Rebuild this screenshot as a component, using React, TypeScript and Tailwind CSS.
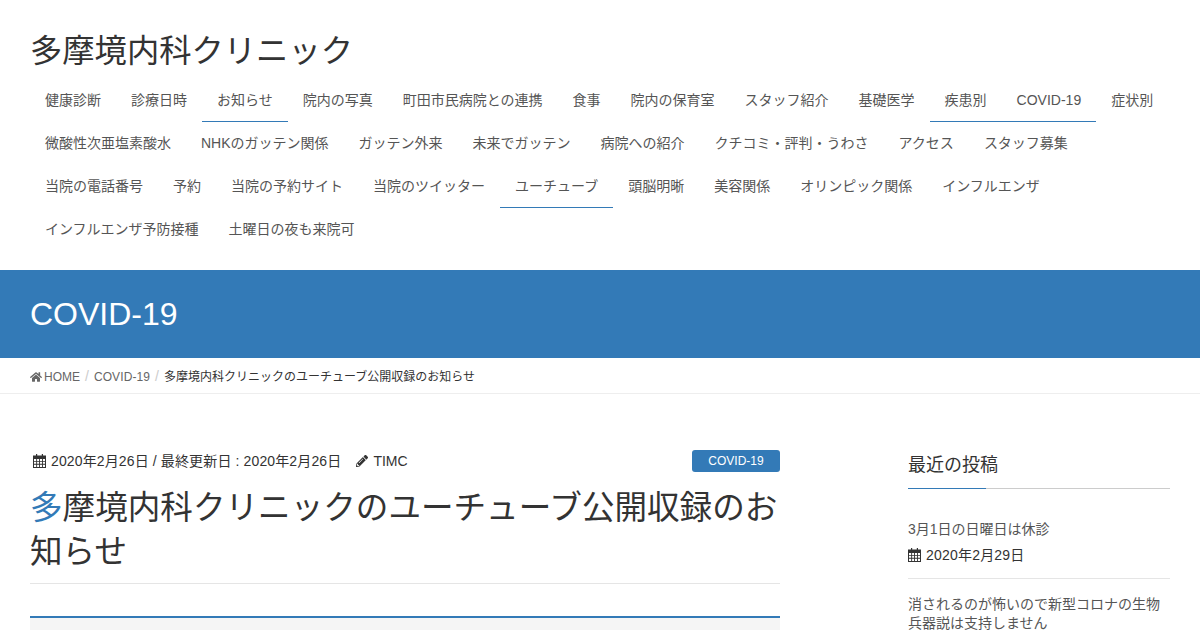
import { FaHome, FaPencilAlt } from "react-icons/fa";

const navRows = [
  [
    { label: "健康診断" },
    { label: "診療日時" },
    { label: "お知らせ", active: true },
    { label: "院内の写真" },
    { label: "町田市民病院との連携" },
    { label: "食事" },
    { label: "院内の保育室" },
    { label: "スタッフ紹介" },
    { label: "基礎医学" },
    { label: "疾患別", active: true },
    { label: "COVID-19", active: true },
    { label: "症状別" },
  ],
  [
    { label: "微酸性次亜塩素酸水" },
    { label: "NHKのガッテン関係" },
    { label: "ガッテン外来" },
    { label: "未来でガッテン" },
    { label: "病院への紹介" },
    { label: "クチコミ・評判・うわさ" },
    { label: "アクセス" },
    { label: "スタッフ募集" },
  ],
  [
    { label: "当院の電話番号" },
    { label: "予約" },
    { label: "当院の予約サイト" },
    { label: "当院のツイッター" },
    { label: "ユーチューブ", active: true },
    { label: "頭脳明晰" },
    { label: "美容関係" },
    { label: "オリンピック関係" },
    { label: "インフルエンザ" },
  ],
  [{ label: "インフルエンザ予防接種" }, { label: "土曜日の夜も来院可" }],
];

function CalendarIcon({ className }: { className?: string }) {
  return (
    <svg viewBox="0 0 13 14" className={className} fill="currentColor">
      <path
        fillRule="evenodd"
        d="M3 0h1.2v1.5h4.6V0H10v1.5h3V14H0V1.5h3V0ZM1 5v2h2.2V5H1Zm3.1 0v2h2v-2h-2Zm2.9 0v2h2V5H7Zm2.9 0v2H12V5H9.9ZM1 7.8v2h2.2v-2H1Zm3.1 0v2h2v-2h-2Zm2.9 0v2h2V7.800H7Zm2.9 0v2H12v-2H9.9ZM1 10.700v2.300h2.200v-2.300H1Zm3.100 0v2.300h2v-2.300h-2Zm2.900 0v2.300h2v-2.300H7Zm2.900 0v2.300H12v-2.300H9.900Z"
      />
    </svg>
  );
}

function App() {
  return (
    <div className="w-[1200px] h-[630px] overflow-hidden bg-white text-[#333] font-['Liberation_Sans','Noto_Sans_CJK_JP',sans-serif]">
      <header className="h-[270px] px-[30px]">
        <div className="pt-[28px] h-[79px] text-[32.3px] leading-[46px] whitespace-nowrap">多摩境内科クリニック</div>
        <nav className="flex flex-col">
          {navRows.map((row, i) => (
            <div key={i} className="flex h-[43px]">
              {row.map((item) => (
                <div
                  key={item.label}
                  className={`px-[15px] pt-[11px] text-sm leading-5 text-[#555] whitespace-nowrap border-b ${
                    item.active ? "border-b-[#337ab7]" : "border-b-transparent"
                  }`}
                >
                  {item.label}
                </div>
              ))}
            </div>
          ))}
        </nav>
      </header>

      <div className="h-[88px] bg-[#337ab7] px-[30px] flex items-center">
        <h1 className="text-[32px] leading-none text-white">COVID-19</h1>
      </div>

      <div className="h-[36px] border-b border-[#eee] px-[30px] flex items-center text-xs text-[#666] pt-[3px]">
        <FaHome className="w-[12px] h-[12px] mr-[2px]" />
        <span>HOME</span>
        <span className="mx-[5px] text-sm leading-none text-[#ccc] -mt-[3px]">/</span>
        <span className="tracking-[0.1px]">COVID-19</span>
        <span className="mx-[5px] text-sm leading-none text-[#ccc] -mt-[3px]">/</span>
        <span className="text-[#333]">多摩境内科クリニックのユーチューブ公開収録のお知らせ</span>
      </div>

      <div className="flex justify-between px-[30px] pt-[56px]">
        <main className="w-[750px]">
          <div className="flex justify-between items-center h-[22px] text-sm">
            <div className="flex items-center pl-[3px]">
              <CalendarIcon className="w-[13px] h-[14px] mr-[5px]" />
              <span className="tracking-[0.13px]">2020年2月26日 / 最終更新日 : 2020年2月26日</span>
              <FaPencilAlt className="w-[12px] h-[12px] ml-[15px] mr-[5px]" />
              <span>TIMC</span>
            </div>
            <div className="w-[88px] h-[22px] bg-[#337ab7] rounded-[3px] text-xs text-white flex items-center justify-center">
              COVID-19
            </div>
          </div>
          <h2 className="mt-[14px] text-[32.6px] leading-[44px] pb-[9px] border-b border-[#e5e5e5] text-[#333]">
            <span className="text-[#337ab7]">多</span>摩境内科クリニックのユーチューブ公開収録のお知らせ
          </h2>
          <div className="mt-[32px] h-[40px] border-t-2 border-[#337ab7] bg-[#f5f5f5]" />
        </main>

        <aside className="w-[262px] text-sm">
          <div className="h-[39px] text-lg leading-[30px] border-b border-[#ccc] relative">
            最近の投稿
            <div className="absolute left-0 bottom-[-1px] w-[78px] h-px bg-[#337ab7]" />
          </div>
          <div className="mt-[30px] pb-[13px] border-b border-[#e5e5e5]">
            <div className="leading-5 text-[#555]">3月1日の日曜日は休診</div>
            <div className="mt-[6px] flex items-center h-5">
              <CalendarIcon className="w-[13px] h-[14px] mr-[5px]" />
              <span className="tracking-[0.2px]">2020年2月29日</span>
            </div>
          </div>
          <div className="mt-[16px] leading-[19px] text-[#555]">消されるのが怖いので新型コロナの生物兵器説は支持しません</div>
        </aside>
      </div>
    </div>
  );
}

export default App;
